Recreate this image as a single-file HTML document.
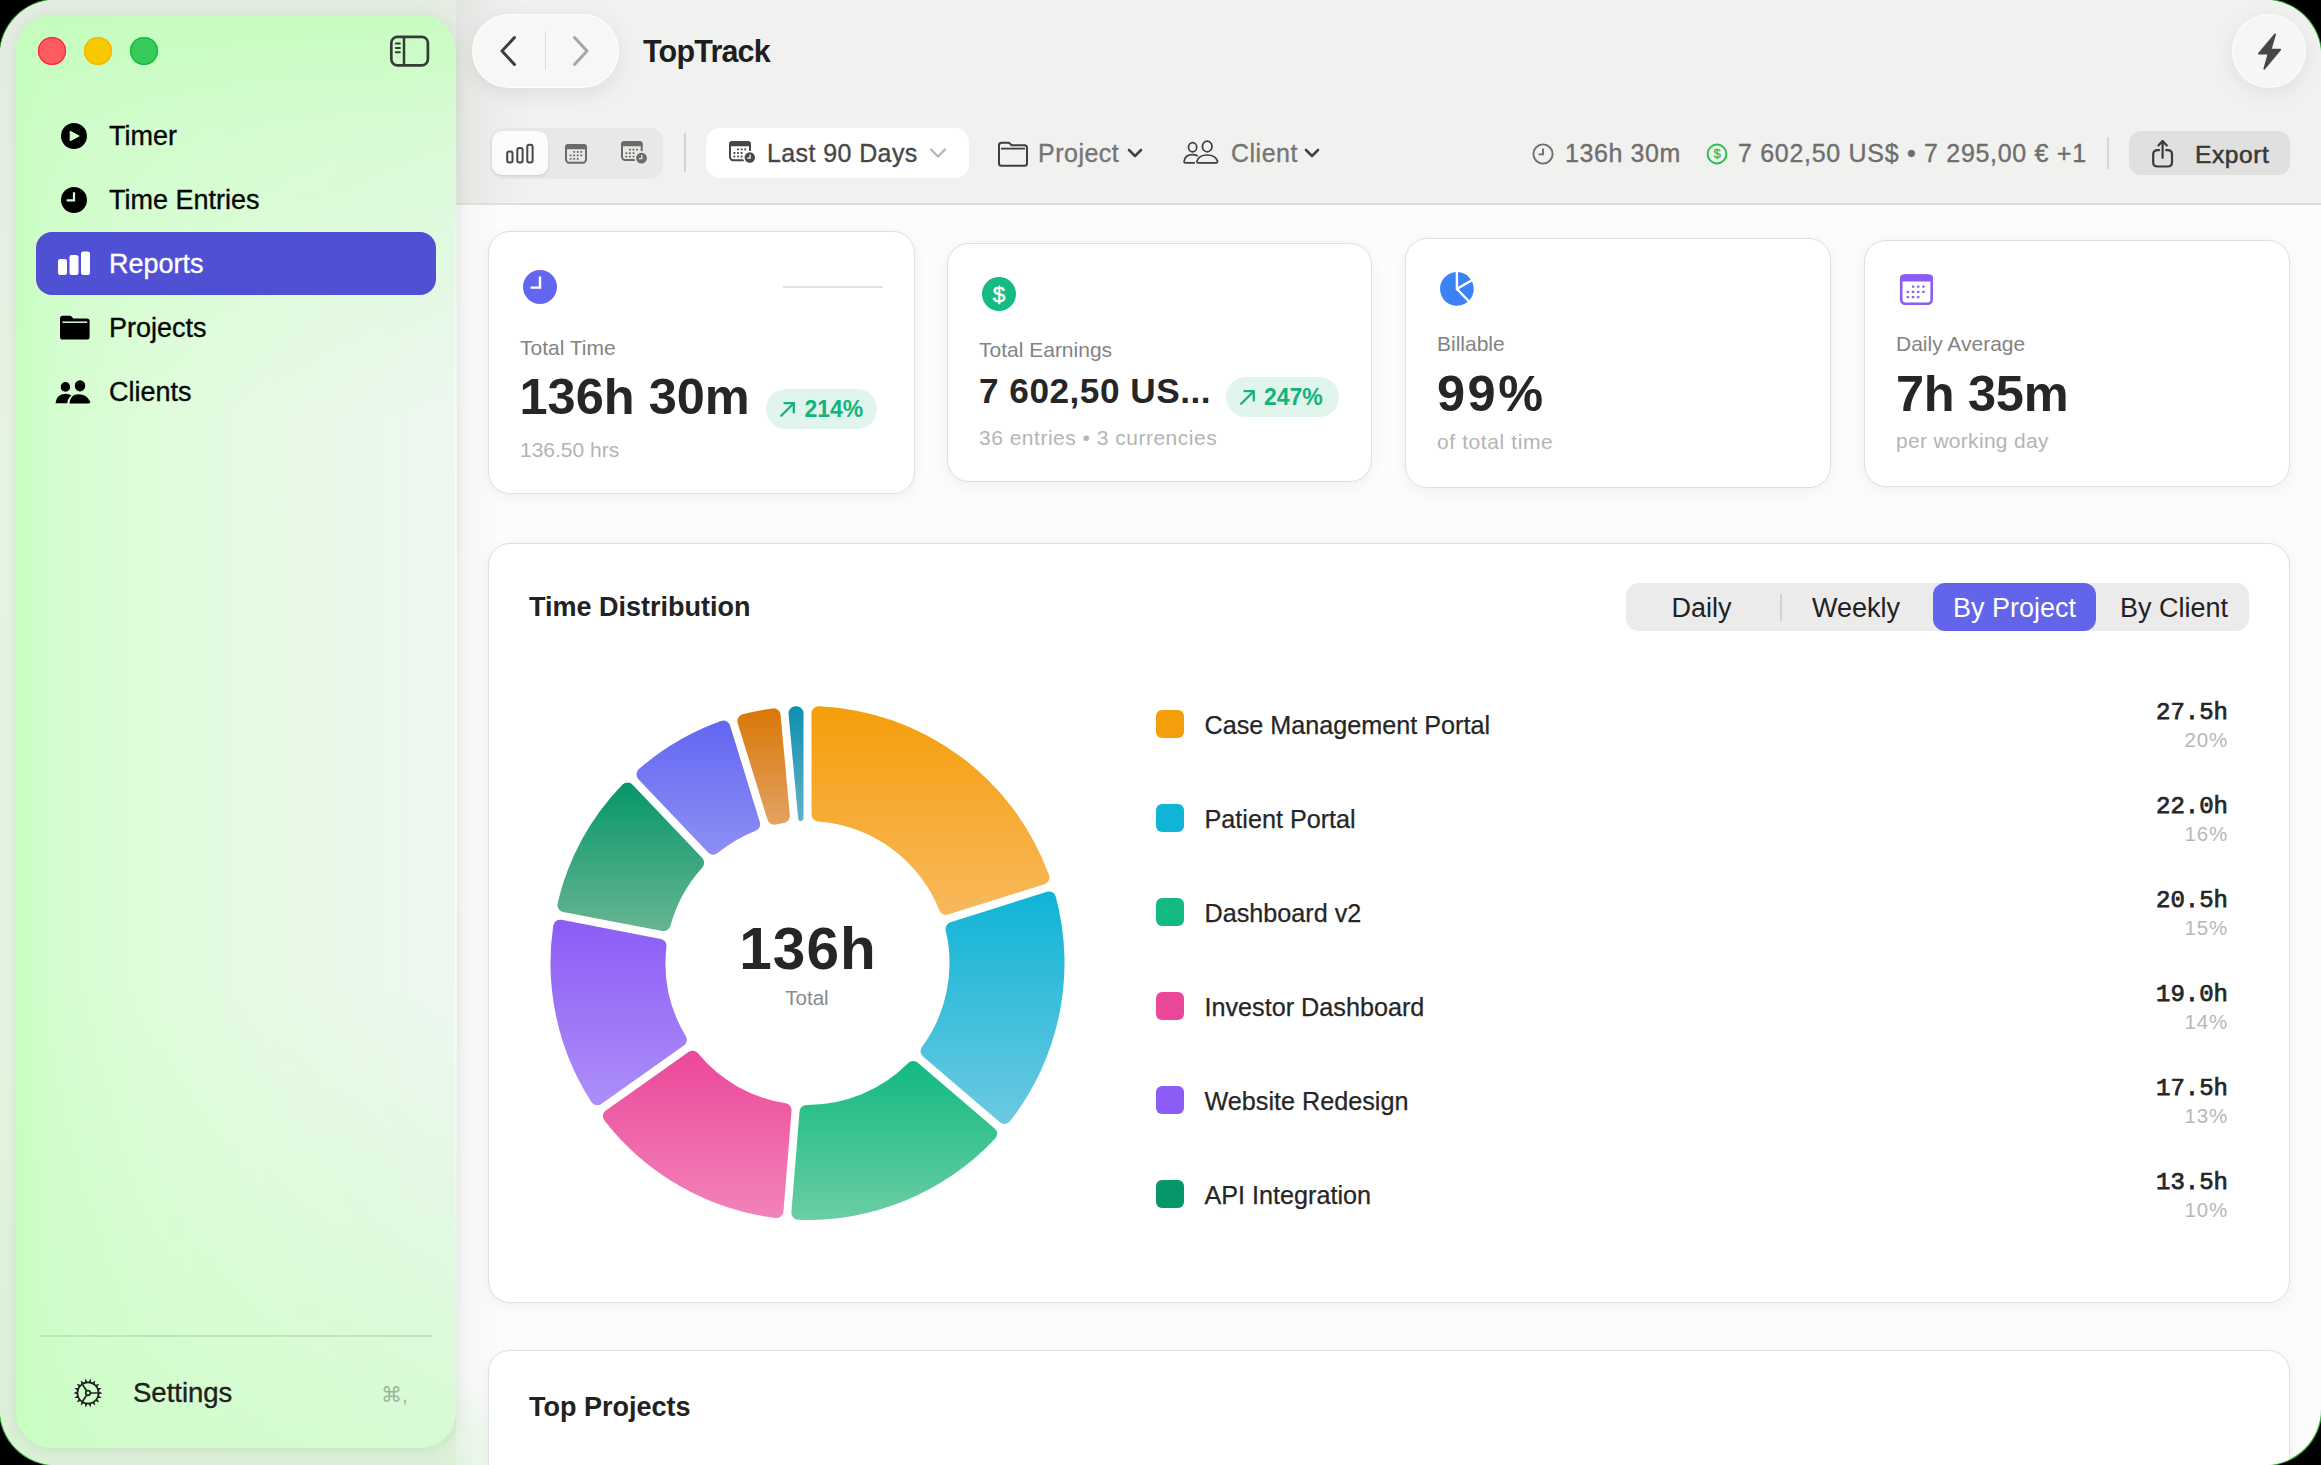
<!DOCTYPE html>
<html><head><meta charset="utf-8"><title>TopTrack Reports</title>
<style>
html,body{margin:0;padding:0}
body{width:2321px;height:1465px;background:#000;overflow:hidden;position:relative;font-family:"Liberation Sans",sans-serif}
.win{position:absolute;left:0;top:0;width:2321px;height:1465px;border-radius:56px;overflow:hidden;background:#fcfcfc;box-shadow:0 0 0 1.2px rgba(60,215,60,0.8)}
.t{position:absolute;white-space:nowrap;line-height:0}
.m{-webkit-text-stroke:0.35px currentColor}
.card{position:absolute;background:#fff;border:1.5px solid #e0e0e0;border-radius:22px;box-sizing:border-box;box-shadow:0 4px 16px rgba(0,0,0,0.045),0 0 6px rgba(0,0,0,0.02)}
svg{overflow:visible}
</style></head><body><div class="win">
<div style="position:absolute;left:0px;top:0px;width:2321px;height:204px;background:#f1f1f0"></div>
<div style="position:absolute;left:456px;top:203px;width:1865px;height:2px;background:#dededc"></div>
<div style="position:absolute;left:456px;top:205px;width:44px;height:1260px;background:linear-gradient(90deg,rgba(60,40,90,0.035),rgba(60,40,90,0))"></div>
<div style="position:absolute;left:456px;top:0px;width:74px;height:203px;background:linear-gradient(90deg,rgba(40,70,30,0.075),rgba(40,70,30,0.02) 50%,rgba(0,0,0,0))"></div>
<div style="position:absolute;left:456px;top:1380px;width:64px;height:85px;background:radial-gradient(ellipse 60px 90px at 0% 100%,rgba(170,240,160,0.28),rgba(170,240,160,0))"></div>
<div style="position:absolute;left:0px;top:0px;width:456px;height:1465px;background:linear-gradient(180deg,#e6ece4 0%,#e8f3e5 30%,#e6f4e3 70%,#dcf0d8 100%)"></div>
<div style="position:absolute;left:16px;top:15px;width:440px;height:1433px;border-radius:36px;background:linear-gradient(180deg,rgba(195,253,187,0.9) 0%,rgba(200,253,193,0.55) 8%,rgba(200,253,193,0) 28%,rgba(200,253,193,0) 68%,rgba(200,253,193,0.6) 100%),linear-gradient(90deg,#c6ffbf 0%,#d4fdcf 7%,#dffcdb 30%,#e7fae5 60%,#eef7f1 100%);box-shadow:0 0 16px rgba(110,190,100,0.16),0 2px 10px rgba(0,0,0,0.04)"></div>
<div style="position:absolute;left:455px;top:60px;width:1.5px;height:1340px;background:linear-gradient(180deg,rgba(255,255,255,0),rgba(255,255,255,0.8) 40%,rgba(255,255,255,0.8) 60%,rgba(255,255,255,0))"></div>
<div style="position:absolute;left:37.7px;top:36.7px;width:28px;height:28px;border-radius:50%;background:#ff5c62;box-shadow:inset 0 0 0 1.2px #ff2436"></div>
<div style="position:absolute;left:83.8px;top:36.7px;width:28px;height:28px;border-radius:50%;background:#fac800;box-shadow:inset 0 0 0 1.2px #f5b400"></div>
<div style="position:absolute;left:129.7px;top:36.7px;width:28px;height:28px;border-radius:50%;background:#38cb5c;box-shadow:inset 0 0 0 1.2px #0cbf36"></div>
<svg style="position:absolute;left:388px;top:34px" width="44" height="34" viewBox="0 0 44 34"><rect x="3.3" y="2.8" width="36.6" height="28.6" rx="6.2" fill="none" stroke="#343d34" stroke-width="2.7"/><line x1="16" y1="3" x2="16" y2="31" stroke="#343d34" stroke-width="2.5"/><g stroke="#343d34" stroke-width="1.9" stroke-linecap="round"><line x1="7.8" y1="9.5" x2="11.9" y2="9.5"/><line x1="7.8" y1="14" x2="11.9" y2="14"/><line x1="7.8" y1="18.3" x2="11.9" y2="18.3"/></g></svg>
<div style="position:absolute;left:36px;top:231.5px;width:399.5px;height:63.19999999999999px;background:#4f50d3;border-radius:16px"></div>
<svg style="position:absolute;left:61px;top:123px" width="26" height="26" viewBox="0 0 26 26"><circle cx="13" cy="13" r="13" fill="#000"/><path d="M9.2 8.2 L18.2 13 L9.2 17.8 Z" fill="#d3fdce" stroke="#d3fdce" stroke-width="1" stroke-linejoin="round"/></svg>
<svg style="position:absolute;left:61px;top:187px" width="26" height="26" viewBox="0 0 26 26"><circle cx="13" cy="13" r="13" fill="#000"/><path d="M13 5.2 V13.4 H5.6" fill="none" stroke="#d6fcd2" stroke-width="2.2"/></svg>
<svg style="position:absolute;left:57px;top:251px" width="34" height="26" viewBox="0 0 34 26"><rect x="1" y="8" width="9" height="16" rx="2.2" fill="#fff"/><rect x="12.5" y="4" width="9" height="20" rx="2.2" fill="#fff"/><rect x="24" y="0.5" width="9" height="23.5" rx="2.2" fill="#fff"/></svg>
<svg style="position:absolute;left:59px;top:314px" width="32" height="27" viewBox="0 0 32 27"><path d="M1 4.5 Q1 1.8 3.8 1.8 H10.5 Q12 1.8 13 3 L14.2 4.5 H27.8 Q30.6 4.5 30.6 7.3 V23 Q30.6 25.6 27.8 25.6 H3.8 Q1 25.6 1 23 Z" fill="#000"/><line x1="3.5" y1="8.2" x2="28.2" y2="8.2" stroke="#d9fcd5" stroke-width="1.5"/></svg>
<svg style="position:absolute;left:55px;top:379px" width="37" height="26" viewBox="0 0 37 26"><ellipse cx="10.4" cy="7.9" rx="4.7" ry="4.9" fill="#000"/><ellipse cx="25" cy="6.8" rx="5.2" ry="5.6" fill="#000"/><path d="M0.5 24.2 Q1.2 15.5 10.5 14.8 Q14.5 14.8 16.5 16.5 Q12.5 19.5 12.2 24.2 Z" fill="#000"/><path d="M14.5 24.6 Q15.3 15.2 23.5 15.2 Q31.7 15.2 35.2 22.5 Q35.6 24.6 33.5 24.6 Z" fill="#000"/></svg>
<div class="t m" style="left:109.00px;top:136.04px;font-size:27px;color:#050805;font-weight:400;font-family:'Liberation Sans', sans-serif;">Timer</div>
<div class="t m" style="left:109.00px;top:199.84px;font-size:27px;color:#050805;font-weight:400;font-family:'Liberation Sans', sans-serif;">Time Entries</div>
<div class="t m" style="left:109.00px;top:263.64px;font-size:27px;color:#ffffff;font-weight:400;font-family:'Liberation Sans', sans-serif;">Reports</div>
<div class="t m" style="left:109.00px;top:327.64px;font-size:27px;color:#050805;font-weight:400;font-family:'Liberation Sans', sans-serif;">Projects</div>
<div class="t m" style="left:109.00px;top:391.64px;font-size:27px;color:#050805;font-weight:400;font-family:'Liberation Sans', sans-serif;">Clients</div>
<div style="position:absolute;left:40px;top:1335px;width:392px;height:2px;background:rgba(110,160,105,0.22)"></div>
<svg style="position:absolute;left:72px;top:1377px" width="32" height="32" viewBox="0 0 32 32"><g fill="none" stroke="#1f241f" stroke-width="1.7"><circle cx="16" cy="16" r="10.6"/><circle cx="16" cy="16" r="2.3"/><line x1="18.90" y1="16.00" x2="26.40" y2="16.00"/><line x1="14.42" y1="13.57" x2="10.34" y2="7.28"/><line x1="14.42" y1="18.43" x2="10.34" y2="24.72"/></g><path fill="#1f241f" d="M26.30 14.55L30.10 15.72L30.10 16.28L26.30 17.45ZM26.17 18.16L29.34 20.56L29.15 21.09L25.18 20.89ZM24.82 21.51L26.98 24.85L26.62 25.28L22.96 23.73ZM22.41 24.19L23.29 28.07L22.80 28.35L19.89 25.64ZM19.22 25.89L18.73 29.83L18.17 29.93L16.36 26.39ZM15.64 26.39L13.83 29.93L13.27 29.83L12.78 25.89ZM12.11 25.64L9.20 28.35L8.71 28.07L9.59 24.19ZM9.04 23.73L5.38 25.28L5.02 24.85L7.18 21.51ZM6.82 20.89L2.85 21.09L2.66 20.56L5.83 18.16ZM5.70 17.45L1.90 16.28L1.90 15.72L5.70 14.55ZM5.83 13.84L2.66 11.44L2.85 10.91L6.82 11.11ZM7.18 10.49L5.02 7.15L5.38 6.72L9.04 8.27ZM9.59 7.81L8.71 3.93L9.20 3.65L12.11 6.36ZM12.78 6.11L13.27 2.17L13.83 2.07L15.64 5.61ZM16.36 5.61L18.17 2.07L18.73 2.17L19.22 6.11ZM19.89 6.36L22.80 3.65L23.29 3.93L22.41 7.81ZM22.96 8.27L26.62 6.72L26.98 7.15L24.82 10.49ZM25.18 11.11L29.15 10.91L29.34 11.44L26.17 13.84Z"/></svg>
<div class="t m" style="left:133.00px;top:1393.27px;font-size:27.5px;color:#1e211e;font-weight:400;font-family:'Liberation Sans', sans-serif;">Settings</div>
<div class="t " style="left:381.00px;top:1394.89px;font-size:20.5px;color:#9fb59c;font-weight:400;font-family:'Liberation Sans', sans-serif;">&#8984;,</div>
<div style="position:absolute;left:472.5px;top:15px;width:145px;height:71.5px;border-radius:36px;background:#f7f7f6;box-shadow:0 0 0 1px rgba(255,255,255,0.95),0 6px 22px rgba(0,0,0,0.09)"></div>
<div style="position:absolute;left:544.5px;top:31px;width:1.5px;height:39px;background:#dcdcdb"></div>
<svg style="position:absolute;left:496px;top:34px" width="26" height="34" viewBox="0 0 26 34"><path d="M18.5 3.5 L6 17 L18.5 30.5" fill="none" stroke="#3d3d3d" stroke-width="3" stroke-linecap="round" stroke-linejoin="round"/></svg>
<svg style="position:absolute;left:568px;top:34px" width="26" height="34" viewBox="0 0 26 34"><path d="M6.5 3.5 L19 17 L6.5 30.5" fill="none" stroke="#a6a6a5" stroke-width="3" stroke-linecap="round" stroke-linejoin="round"/></svg>
<div class="t " style="left:643.00px;top:51.33px;font-size:30.5px;color:#1e1e1e;font-weight:700;font-family:'Liberation Sans', sans-serif;letter-spacing:-0.8px;">TopTrack</div>
<div style="position:absolute;left:2233px;top:15px;width:72px;height:72px;border-radius:50%;background:#f6f6f5;box-shadow:0 0 0 1px rgba(255,255,255,0.95),0 5px 22px rgba(0,0,0,0.08)"></div>
<svg style="position:absolute;left:2255px;top:33px" width="30" height="40" viewBox="0 0 30 40"><path d="M20.1 1.4 L3.9 20.6 H13.6 L9.3 35.8 L25.2 16.6 H15.6 Z" fill="#474747" stroke="#474747" stroke-width="1.8" stroke-linejoin="round"/></svg>
<div style="position:absolute;left:489px;top:128px;width:174px;height:51px;background:#e8e8e6;border-radius:13px"></div>
<div style="position:absolute;left:492px;top:131px;width:56px;height:44px;background:#fbfbfa;border-radius:10px;box-shadow:0 1px 3px rgba(0,0,0,0.12)"></div>
<svg style="position:absolute;left:503px;top:141px" width="34" height="26" viewBox="0 0 34 26"><g fill="none" stroke="#474747" stroke-width="2"><rect x="4.2" y="10.4" width="5.3" height="11.2" rx="2"/><rect x="14.3" y="7.1" width="5.3" height="14.5" rx="2"/><rect x="24.3" y="3.8" width="5.3" height="17.8" rx="2"/></g></svg>
<svg style="position:absolute;left:563px;top:142px" width="36" height="33.7" viewBox="0 0 36 33.7"><rect x="3.0" y="3.0" width="20.0" height="17.7" rx="3.2" fill="none" stroke="#6b6b6a" stroke-width="2.0"/><path d="M2 7.2 V5.2 Q2 2 5.2 2 H20.8 Q24 2 24 5.2 V7.2 Z" fill="#6b6b6a"/><rect x="10.20" y="8.95" width="1.9" height="1.9" rx="0.4" fill="#6b6b6a"/><rect x="13.75" y="8.95" width="1.9" height="1.9" rx="0.4" fill="#6b6b6a"/><rect x="17.30" y="8.95" width="1.9" height="1.9" rx="0.4" fill="#6b6b6a"/><rect x="6.65" y="12.45" width="1.9" height="1.9" rx="0.4" fill="#6b6b6a"/><rect x="10.20" y="12.45" width="1.9" height="1.9" rx="0.4" fill="#6b6b6a"/><rect x="13.75" y="12.45" width="1.9" height="1.9" rx="0.4" fill="#6b6b6a"/><rect x="17.30" y="12.45" width="1.9" height="1.9" rx="0.4" fill="#6b6b6a"/><rect x="6.65" y="15.95" width="1.9" height="1.9" rx="0.4" fill="#6b6b6a"/><rect x="10.20" y="15.95" width="1.9" height="1.9" rx="0.4" fill="#6b6b6a"/><rect x="13.75" y="15.95" width="1.9" height="1.9" rx="0.4" fill="#6b6b6a"/></svg>
<svg style="position:absolute;left:619px;top:139px" width="35.7" height="34" viewBox="0 0 35.7 34"><rect x="3.0" y="3.0" width="19.7" height="18.0" rx="3.2" fill="none" stroke="#6b6b6a" stroke-width="2.0"/><path d="M2 7.2 V5.2 Q2 2 5.2 2 H20.5 Q23.7 2 23.7 5.2 V7.2 Z" fill="#6b6b6a"/><rect x="10.00" y="9.65" width="1.9" height="1.9" rx="0.4" fill="#6b6b6a"/><rect x="13.55" y="9.65" width="1.9" height="1.9" rx="0.4" fill="#6b6b6a"/><rect x="17.10" y="9.65" width="1.9" height="1.9" rx="0.4" fill="#6b6b6a"/><rect x="6.45" y="13.15" width="1.9" height="1.9" rx="0.4" fill="#6b6b6a"/><rect x="10.00" y="13.15" width="1.9" height="1.9" rx="0.4" fill="#6b6b6a"/><rect x="13.55" y="13.15" width="1.9" height="1.9" rx="0.4" fill="#6b6b6a"/><rect x="6.45" y="16.65" width="1.9" height="1.9" rx="0.4" fill="#6b6b6a"/><rect x="10.00" y="16.65" width="1.9" height="1.9" rx="0.4" fill="#6b6b6a"/><rect x="13.55" y="16.65" width="1.9" height="1.9" rx="0.4" fill="#6b6b6a"/><circle cx="22.5" cy="19.1" r="7.0" fill="#e8e8e6"/><circle cx="22.5" cy="19.1" r="5.4" fill="#6b6b6a"/><path d="M22.80 16.10 V19.70 H19.90" fill="none" stroke="#e8e8e6" stroke-width="1.3"/></svg>
<div style="position:absolute;left:684px;top:133px;width:2px;height:39px;background:#d3d3d1"></div>
<div style="position:absolute;left:706px;top:128px;width:263px;height:50px;background:#ffffff;border-radius:14px"></div>
<svg style="position:absolute;left:727px;top:139.2px" width="36" height="34.3" viewBox="0 0 36 34.3"><rect x="3.0" y="3.0" width="20.0" height="18.3" rx="3.2" fill="none" stroke="#474747" stroke-width="2.0"/><path d="M2 7.2 V5.2 Q2 2 5.2 2 H20.8 Q24 2 24 5.2 V7.2 Z" fill="#474747"/><rect x="10.05" y="9.45" width="1.9" height="1.9" rx="0.4" fill="#474747"/><rect x="13.65" y="9.45" width="1.9" height="1.9" rx="0.4" fill="#474747"/><rect x="17.25" y="9.45" width="1.9" height="1.9" rx="0.4" fill="#474747"/><rect x="6.45" y="13.00" width="1.9" height="1.9" rx="0.4" fill="#474747"/><rect x="10.05" y="13.00" width="1.9" height="1.9" rx="0.4" fill="#474747"/><rect x="13.65" y="13.00" width="1.9" height="1.9" rx="0.4" fill="#474747"/><rect x="6.45" y="16.55" width="1.9" height="1.9" rx="0.4" fill="#474747"/><rect x="10.05" y="16.55" width="1.9" height="1.9" rx="0.4" fill="#474747"/><rect x="13.65" y="16.55" width="1.9" height="1.9" rx="0.4" fill="#474747"/><circle cx="22.8" cy="18.5" r="6.800000000000001" fill="#ffffff"/><circle cx="22.8" cy="18.5" r="5.2" fill="#474747"/><path d="M23.10 15.50 V19.10 H20.20" fill="none" stroke="#ffffff" stroke-width="1.3"/></svg>
<div class="t m" style="left:767.00px;top:153.13px;font-size:25px;color:#474747;font-weight:400;font-family:'Liberation Sans', sans-serif;letter-spacing:0.4px;">Last 90 Days</div>
<svg style="position:absolute;left:928px;top:146px" width="20" height="14" viewBox="0 0 20 14"><path d="M3 3.5 L10 10.5 L17 3.5" fill="none" stroke="#b3b3b2" stroke-width="2.2" stroke-linecap="round" stroke-linejoin="round"/></svg>
<svg style="position:absolute;left:996px;top:140px" width="34" height="28" viewBox="0 0 34 28"><path d="M3 5.5 Q3 2.8 5.6 2.8 H12 Q13.3 2.8 14.2 3.8 L15.6 5.3 H28.5 Q31 5.3 31 7.8 V23.5 Q31 25.8 28.5 25.8 H5.6 Q3 25.8 3 23.5 Z" fill="none" stroke="#3e3e3e" stroke-width="2"/><line x1="5" y1="8.6" x2="29" y2="8.6" stroke="#3e3e3e" stroke-width="1.8"/></svg>
<div class="t m" style="left:1038.00px;top:153.13px;font-size:25px;color:#757575;font-weight:400;font-family:'Liberation Sans', sans-serif;letter-spacing:0.5px;">Project</div>
<svg style="position:absolute;left:1125px;top:146px" width="20" height="14" viewBox="0 0 20 14"><path d="M4 4 L10 10 L16 4" fill="none" stroke="#444" stroke-width="2.6" stroke-linecap="round" stroke-linejoin="round"/></svg>
<svg style="position:absolute;left:1175px;top:132px" width="55" height="40" viewBox="0 0 55 40"><g fill="none" stroke="#3e3e3e" stroke-width="1.7" stroke-linecap="round" stroke-linejoin="round"><ellipse cx="17.6" cy="15.3" rx="4.1" ry="4.6"/><ellipse cx="32.2" cy="14.5" rx="4.8" ry="5.3"/><path d="M22.3 23.7 Q20 22.6 17.6 22.6 Q10.2 22.6 9.1 29.3 Q8.9 30.9 10.6 30.9 H19.2"/><path d="M23.6 30.9 H41 Q42.8 30.9 42.5 29.2 Q40.6 23 32.2 23 Q23.8 23 21.9 29.2 Q21.6 30.9 23.6 30.9 Z"/></g></svg>
<div class="t m" style="left:1231.00px;top:153.13px;font-size:25px;color:#757575;font-weight:400;font-family:'Liberation Sans', sans-serif;letter-spacing:0.5px;">Client</div>
<svg style="position:absolute;left:1302px;top:146px" width="20" height="14" viewBox="0 0 20 14"><path d="M4 4 L10 10 L16 4" fill="none" stroke="#444" stroke-width="2.6" stroke-linecap="round" stroke-linejoin="round"/></svg>
<svg style="position:absolute;left:1531px;top:142px" width="24" height="24" viewBox="0 0 24 24"><circle cx="12" cy="12" r="9.6" fill="none" stroke="#6f6f6f" stroke-width="1.9"/><path d="M12 6.5 V12.4 H7.6" fill="none" stroke="#6f6f6f" stroke-width="1.9"/></svg>
<div class="t m" style="left:1565.00px;top:153.23px;font-size:25px;color:#6e6e6e;font-weight:400;font-family:'Liberation Sans', sans-serif;letter-spacing:0.6px;">136h 30m</div>
<svg style="position:absolute;left:1705px;top:142px" width="24" height="24" viewBox="0 0 24 24"><circle cx="12" cy="12" r="9.4" fill="none" stroke="#29c246" stroke-width="2"/><text x="12" y="16.4" text-anchor="middle" font-family="Liberation Sans" font-size="13" fill="#29c246" stroke="#29c246" stroke-width="0.3">$</text></svg>
<div class="t m" style="left:1738.00px;top:153.23px;font-size:25px;color:#6e6e6e;font-weight:400;font-family:'Liberation Sans', sans-serif;letter-spacing:0.7px;">7 602,50 US$ &#8226; 7 295,00 &#8364; +1</div>
<div style="position:absolute;left:2107px;top:137px;width:2px;height:32px;background:#d8d8d6"></div>
<div style="position:absolute;left:2129px;top:131px;width:161px;height:44px;background:#e0e0de;border-radius:12px"></div>
<svg style="position:absolute;left:2148px;top:138px" width="30" height="32" viewBox="0 0 30 32"><g fill="none" stroke="#3a3a3a" stroke-width="2.2" stroke-linecap="round" stroke-linejoin="round"><path d="M11 12.2 H9.6 Q5.2 12.2 5.2 16.6 V24.2 Q5.2 28.5 9.6 28.5 H19.6 Q24 28.5 24 24.2 V16.6 Q24 12.2 19.6 12.2 H18.2"/><path d="M14.6 19.8 V3.4"/><path d="M10.4 7.4 L14.6 3.1 L18.8 7.4"/></g></svg>
<div class="t " style="left:2195.00px;top:154.51px;font-size:24.5px;color:#383838;font-weight:400;font-family:'Liberation Sans', sans-serif;letter-spacing:0.6px;-webkit-text-stroke:0.55px #383838;">Export</div>
<div class="card" style="left:488px;top:231px;width:427px;height:263px;"></div>
<div class="card" style="left:947px;top:243px;width:425px;height:239px;"></div>
<div class="card" style="left:1405px;top:238px;width:426px;height:250px;"></div>
<div class="card" style="left:1864px;top:240px;width:426px;height:247px;"></div>
<svg style="position:absolute;left:523px;top:270px" width="34" height="34" viewBox="0 0 34 34"><circle cx="17" cy="17" r="17" fill="#6366f1"/><path d="M17 6.5 V17.6 H7.5" fill="none" stroke="#fff" stroke-width="2.4"/></svg>
<div style="position:absolute;left:783px;top:285.8px;width:100px;height:2.0px;background:#e3e3e3"></div>
<div class="t " style="left:520.00px;top:348.12px;font-size:21px;color:#838383;font-weight:400;font-family:'Liberation Sans', sans-serif;">Total Time</div>
<div class="t " style="left:519.50px;top:397.29px;font-size:50.5px;color:#262626;font-weight:700;font-family:'Liberation Sans', sans-serif;letter-spacing:0px;">136h 30m</div>
<div style="position:absolute;left:766px;top:389px;width:111px;height:40px;background:#e1f5ec;border-radius:20px"></div>
<svg style="position:absolute;left:778px;top:399px" width="20" height="20" viewBox="0 0 20 20"><g fill="none" stroke="#12b37c" stroke-width="2.3" stroke-linecap="round" stroke-linejoin="round"><path d="M3.2 16.8 L15.5 4.5"/><path d="M6.5 4.2 H15.8 V13.5"/></g></svg>
<div class="t " style="left:804.50px;top:409.03px;font-size:23px;color:#12b37c;font-weight:700;font-family:'Liberation Sans', sans-serif;">214%</div>
<div class="t " style="left:520.00px;top:449.52px;font-size:21px;color:#b4b4b4;font-weight:400;font-family:'Liberation Sans', sans-serif;">136.50 hrs</div>
<svg style="position:absolute;left:982px;top:277px" width="34" height="34" viewBox="0 0 34 34"><circle cx="17" cy="17" r="17" fill="#14bb83"/><text x="17" y="24.6" text-anchor="middle" font-family="Liberation Sans" font-size="22.5" fill="#fff" stroke="#fff" stroke-width="0.5">$</text></svg>
<div class="t " style="left:979.00px;top:349.72px;font-size:21px;color:#838383;font-weight:400;font-family:'Liberation Sans', sans-serif;">Total Earnings</div>
<div class="t " style="left:979.00px;top:390.80px;font-size:35.2px;color:#262626;font-weight:700;font-family:'Liberation Sans', sans-serif;letter-spacing:0.5px;">7 602,50 US...</div>
<div style="position:absolute;left:1226px;top:377px;width:113px;height:40px;background:#e1f5ec;border-radius:20px"></div>
<svg style="position:absolute;left:1238px;top:387px" width="20" height="20" viewBox="0 0 20 20"><g fill="none" stroke="#12b37c" stroke-width="2.3" stroke-linecap="round" stroke-linejoin="round"><path d="M3.2 16.8 L15.5 4.5"/><path d="M6.5 4.2 H15.8 V13.5"/></g></svg>
<div class="t " style="left:1264.00px;top:397.03px;font-size:23px;color:#12b37c;font-weight:700;font-family:'Liberation Sans', sans-serif;">247%</div>
<div class="t " style="left:979.00px;top:437.72px;font-size:21px;color:#b4b4b4;font-weight:400;font-family:'Liberation Sans', sans-serif;letter-spacing:0.5px;">36 entries &#8226; 3 currencies</div>
<svg style="position:absolute;left:1432px;top:264px" width="50" height="50" viewBox="0 0 50 50"><path fill="#3b82f6" d="M26.10 22.82L26.10 8.04A16.9 16.9 0 0 1 38.90 15.43ZM26.83 25.17L40.10 17.51A16.9 16.9 0 0 1 37.47 36.19ZM23.70 25.38L35.75 37.86A16.9 16.9 0 1 1 23.70 8.04Z"/></svg>
<div class="t " style="left:1437.00px;top:344.42px;font-size:21px;color:#838383;font-weight:400;font-family:'Liberation Sans', sans-serif;">Billable</div>
<div class="t " style="left:1437.00px;top:394.19px;font-size:50.5px;color:#262626;font-weight:700;font-family:'Liberation Sans', sans-serif;letter-spacing:2.5px;">99%</div>
<div class="t " style="left:1437.00px;top:442.32px;font-size:21px;color:#b4b4b4;font-weight:400;font-family:'Liberation Sans', sans-serif;letter-spacing:0.6px;">of total time</div>
<svg style="position:absolute;left:1899px;top:274px" width="36" height="32" viewBox="0 0 36 32"><rect x="2.2" y="1.6" width="30.5" height="28.2" rx="4" fill="none" stroke="#8b5cf6" stroke-width="2.6"/><rect x="1" y="0.4" width="33" height="7.2" rx="3.5" fill="#8b5cf6"/><rect x="12.9" y="11.4" width="2.3" height="2.3" rx="0.5" fill="#8b5cf6"/><rect x="18.1" y="11.4" width="2.3" height="2.3" rx="0.5" fill="#8b5cf6"/><rect x="23.3" y="11.4" width="2.3" height="2.3" rx="0.5" fill="#8b5cf6"/><rect x="7.7" y="16.7" width="2.3" height="2.3" rx="0.5" fill="#8b5cf6"/><rect x="12.9" y="16.7" width="2.3" height="2.3" rx="0.5" fill="#8b5cf6"/><rect x="18.1" y="16.7" width="2.3" height="2.3" rx="0.5" fill="#8b5cf6"/><rect x="23.3" y="16.7" width="2.3" height="2.3" rx="0.5" fill="#8b5cf6"/><rect x="7.7" y="21.9" width="2.3" height="2.3" rx="0.5" fill="#8b5cf6"/><rect x="12.9" y="21.9" width="2.3" height="2.3" rx="0.5" fill="#8b5cf6"/><rect x="18.1" y="21.9" width="2.3" height="2.3" rx="0.5" fill="#8b5cf6"/></svg>
<div class="t " style="left:1896.00px;top:343.72px;font-size:21px;color:#838383;font-weight:400;font-family:'Liberation Sans', sans-serif;">Daily Average</div>
<div class="t " style="left:1896.00px;top:394.19px;font-size:50.5px;color:#262626;font-weight:700;font-family:'Liberation Sans', sans-serif;letter-spacing:-0.3px;">7h 35m</div>
<div class="t " style="left:1896.00px;top:441.32px;font-size:21px;color:#b4b4b4;font-weight:400;font-family:'Liberation Sans', sans-serif;letter-spacing:0.3px;">per working day</div>
<div class="card" style="left:488px;top:543px;width:1802px;height:760px;"></div>
<div class="t " style="left:529.00px;top:607.44px;font-size:27px;color:#222222;font-weight:700;font-family:'Liberation Sans', sans-serif;">Time Distribution</div>
<div style="position:absolute;left:1626px;top:583px;width:623px;height:48px;background:#ebebeb;border-radius:13px"></div>
<div style="position:absolute;left:1779.5px;top:594px;width:2.0px;height:27px;background:#d2d2d2"></div>
<div style="position:absolute;left:1933px;top:583px;width:163px;height:48px;background:#6264ea;border-radius:12px"></div>
<div class="t " style="left:1701.50px;transform:translateX(-50%);top:608.14px;font-size:27px;color:#222;font-weight:400;font-family:'Liberation Sans', sans-serif;">Daily</div>
<div class="t " style="left:1856.00px;transform:translateX(-50%);top:608.14px;font-size:27px;color:#222;font-weight:400;font-family:'Liberation Sans', sans-serif;">Weekly</div>
<div class="t " style="left:2014.50px;transform:translateX(-50%);top:608.14px;font-size:27px;color:#fff;font-weight:400;font-family:'Liberation Sans', sans-serif;">By Project</div>
<div class="t " style="left:2174.00px;transform:translateX(-50%);top:608.14px;font-size:27px;color:#222;font-weight:400;font-family:'Liberation Sans', sans-serif;">By Client</div>
<svg style="position:absolute;left:530px;top:690px" width="560" height="560" viewBox="530 690 560 560"><defs>
<linearGradient id="g0" x1="0" y1="0" x2="0" y2="1"><stop offset="0" stop-color="#f59e0b"/><stop offset="1" stop-color="#f8b85c"/></linearGradient>
<linearGradient id="g1" x1="0" y1="0" x2="0" y2="1"><stop offset="0" stop-color="#0fb4d6"/><stop offset="1" stop-color="#6cc9e1"/></linearGradient>
<linearGradient id="g2" x1="0" y1="0" x2="0" y2="1"><stop offset="0" stop-color="#12b981"/><stop offset="1" stop-color="#6bcea4"/></linearGradient>
<linearGradient id="g3" x1="0" y1="0" x2="0" y2="1"><stop offset="0" stop-color="#ec4899"/><stop offset="1" stop-color="#f283b9"/></linearGradient>
<linearGradient id="g4" x1="0" y1="0" x2="0" y2="1"><stop offset="0" stop-color="#8b5cf6"/><stop offset="1" stop-color="#ad8ef8"/></linearGradient>
<linearGradient id="g5" x1="0" y1="0" x2="0" y2="1"><stop offset="0" stop-color="#069669"/><stop offset="1" stop-color="#67b592"/></linearGradient>
<linearGradient id="g6" x1="0" y1="0" x2="0" y2="1"><stop offset="0" stop-color="#6366f1"/><stop offset="1" stop-color="#8d8ff5"/></linearGradient>
<linearGradient id="g7" x1="0" y1="0" x2="0" y2="1"><stop offset="0" stop-color="#d97706"/><stop offset="1" stop-color="#e3a263"/></linearGradient>
<linearGradient id="g8" x1="0" y1="0" x2="0" y2="1"><stop offset="0" stop-color="#0e8fb0"/><stop offset="1" stop-color="#62b1c8"/></linearGradient>
</defs>
<path fill="url(#g0)" d="M811.50 814.41 L811.50 713.24 A7.00 7.00 0 0 1 818.81 706.25 A257 257 0 0 1 1049.01 875.12 A7.00 7.00 0 0 1 1044.53 884.20 L948.04 914.57 A7.00 7.00 0 0 1 939.43 910.48 A142 142 0 0 0 817.98 821.39 A7.00 7.00 0 0 1 811.50 814.41 Z"/>
<path fill="url(#g1)" d="M950.44 922.20 L1046.94 891.83 A7.00 7.00 0 0 1 1055.80 896.70 A257 257 0 0 1 1009.94 1121.32 A7.00 7.00 0 0 1 999.88 1122.33 L923.01 1056.56 A7.00 7.00 0 0 1 921.92 1047.10 A142 142 0 0 0 945.73 930.48 A7.00 7.00 0 0 1 950.44 922.20 Z"/>
<path fill="url(#g2)" d="M917.81 1062.64 L994.68 1128.41 A7.00 7.00 0 0 1 995.24 1138.51 A257 257 0 0 1 798.11 1219.83 A7.00 7.00 0 0 1 791.39 1212.27 L799.53 1111.43 A7.00 7.00 0 0 1 806.55 1105.00 A142 142 0 0 0 908.29 1063.03 A7.00 7.00 0 0 1 917.81 1062.64 Z"/>
<path fill="url(#g3)" d="M791.56 1110.79 L783.42 1211.63 A7.00 7.00 0 0 1 775.57 1218.01 A257 257 0 0 1 604.42 1120.50 A7.00 7.00 0 0 1 605.91 1110.50 L688.50 1052.08 A7.00 7.00 0 0 1 697.94 1053.34 A142 142 0 0 0 785.66 1103.31 A7.00 7.00 0 0 1 791.56 1110.79 Z"/>
<path fill="url(#g4)" d="M683.88 1045.55 L601.29 1103.97 A7.00 7.00 0 0 1 591.36 1102.04 A257 257 0 0 1 553.23 925.65 A7.00 7.00 0 0 1 561.48 919.79 L660.82 938.88 A7.00 7.00 0 0 1 666.45 946.57 A142 142 0 0 0 685.83 1036.22 A7.00 7.00 0 0 1 683.88 1045.55 Z"/>
<path fill="url(#g5)" d="M662.33 931.03 L562.99 911.93 A7.00 7.00 0 0 1 557.50 903.44 A257 257 0 0 1 622.51 784.60 A7.00 7.00 0 0 1 632.63 784.64 L702.28 858.00 A7.00 7.00 0 0 1 702.39 867.52 A142 142 0 0 0 670.41 925.98 A7.00 7.00 0 0 1 662.33 931.03 Z"/>
<path fill="url(#g6)" d="M708.08 852.49 L638.43 779.13 A7.00 7.00 0 0 1 638.91 769.02 A257 257 0 0 1 721.02 720.99 A7.00 7.00 0 0 1 730.06 725.52 L759.88 822.19 A7.00 7.00 0 0 1 755.74 830.77 A142 142 0 0 0 717.59 853.09 A7.00 7.00 0 0 1 708.08 852.49 Z"/>
<path fill="url(#g7)" d="M767.52 819.83 L737.70 723.16 A7.00 7.00 0 0 1 742.63 714.32 A257 257 0 0 1 772.64 708.38 A7.00 7.00 0 0 1 780.56 714.67 L789.86 815.40 A7.00 7.00 0 0 1 784.04 822.95 A142 142 0 0 0 775.78 824.59 A7.00 7.00 0 0 1 767.52 819.83 Z"/>
<path fill="url(#g8)" d="M798.21 818.86 L788.52 713.93 A7.00 7.00 0 0 1 795.16 706.30 A257 257 0 0 1 796.19 706.25 A7.00 7.00 0 0 1 803.50 713.24 L803.50 818.62 A2.53 2.53 0 0 1 801.09 821.14 A142 142 0 0 0 800.84 821.16 A2.53 2.53 0 0 1 798.21 818.86 Z"/>
</svg><div class="t " style="left:808.00px;transform:translateX(-50%);top:949.22px;font-size:58.5px;color:#262626;font-weight:700;font-family:'Liberation Sans', sans-serif;letter-spacing:1.0px;">136h</div>
<div class="t " style="left:807.00px;transform:translateX(-50%);top:997.89px;font-size:20.5px;color:#8a8a8a;font-weight:400;font-family:'Liberation Sans', sans-serif;">Total</div>
<div style="position:absolute;left:1156px;top:710px;width:28px;height:28px;background:#f59e0b;border-radius:6px"></div>
<div class="t " style="left:1204.50px;top:724.66px;font-size:25.2px;color:#262626;font-weight:400;font-family:'Liberation Sans', sans-serif;-webkit-text-stroke:0.25px #262626;">Case Management Portal</div>
<div class="t " style="right:93.00px;top:712.61px;font-size:24px;color:#262626;font-weight:400;font-family:'Liberation Mono', monospace;-webkit-text-stroke:0.75px #262626;">27.5h</div>
<div class="t " style="right:93.00px;top:739.69px;font-size:20.5px;color:#b8b8b8;font-weight:400;font-family:'Liberation Sans', sans-serif;letter-spacing:0.8px;">20%</div>
<div style="position:absolute;left:1156px;top:804px;width:28px;height:28px;background:#0fb4d6;border-radius:6px"></div>
<div class="t " style="left:1204.50px;top:818.66px;font-size:25.2px;color:#262626;font-weight:400;font-family:'Liberation Sans', sans-serif;-webkit-text-stroke:0.25px #262626;">Patient Portal</div>
<div class="t " style="right:93.00px;top:806.61px;font-size:24px;color:#262626;font-weight:400;font-family:'Liberation Mono', monospace;-webkit-text-stroke:0.75px #262626;">22.0h</div>
<div class="t " style="right:93.00px;top:833.69px;font-size:20.5px;color:#b8b8b8;font-weight:400;font-family:'Liberation Sans', sans-serif;letter-spacing:0.8px;">16%</div>
<div style="position:absolute;left:1156px;top:898px;width:28px;height:28px;background:#12b981;border-radius:6px"></div>
<div class="t " style="left:1204.50px;top:912.66px;font-size:25.2px;color:#262626;font-weight:400;font-family:'Liberation Sans', sans-serif;-webkit-text-stroke:0.25px #262626;">Dashboard v2</div>
<div class="t " style="right:93.00px;top:900.61px;font-size:24px;color:#262626;font-weight:400;font-family:'Liberation Mono', monospace;-webkit-text-stroke:0.75px #262626;">20.5h</div>
<div class="t " style="right:93.00px;top:927.69px;font-size:20.5px;color:#b8b8b8;font-weight:400;font-family:'Liberation Sans', sans-serif;letter-spacing:0.8px;">15%</div>
<div style="position:absolute;left:1156px;top:992px;width:28px;height:28px;background:#ec4899;border-radius:6px"></div>
<div class="t " style="left:1204.50px;top:1006.66px;font-size:25.2px;color:#262626;font-weight:400;font-family:'Liberation Sans', sans-serif;-webkit-text-stroke:0.25px #262626;">Investor Dashboard</div>
<div class="t " style="right:93.00px;top:994.61px;font-size:24px;color:#262626;font-weight:400;font-family:'Liberation Mono', monospace;-webkit-text-stroke:0.75px #262626;">19.0h</div>
<div class="t " style="right:93.00px;top:1021.69px;font-size:20.5px;color:#b8b8b8;font-weight:400;font-family:'Liberation Sans', sans-serif;letter-spacing:0.8px;">14%</div>
<div style="position:absolute;left:1156px;top:1086px;width:28px;height:28px;background:#8b5cf6;border-radius:6px"></div>
<div class="t " style="left:1204.50px;top:1100.66px;font-size:25.2px;color:#262626;font-weight:400;font-family:'Liberation Sans', sans-serif;-webkit-text-stroke:0.25px #262626;">Website Redesign</div>
<div class="t " style="right:93.00px;top:1088.61px;font-size:24px;color:#262626;font-weight:400;font-family:'Liberation Mono', monospace;-webkit-text-stroke:0.75px #262626;">17.5h</div>
<div class="t " style="right:93.00px;top:1115.69px;font-size:20.5px;color:#b8b8b8;font-weight:400;font-family:'Liberation Sans', sans-serif;letter-spacing:0.8px;">13%</div>
<div style="position:absolute;left:1156px;top:1180px;width:28px;height:28px;background:#069669;border-radius:6px"></div>
<div class="t " style="left:1204.50px;top:1194.66px;font-size:25.2px;color:#262626;font-weight:400;font-family:'Liberation Sans', sans-serif;-webkit-text-stroke:0.25px #262626;">API Integration</div>
<div class="t " style="right:93.00px;top:1182.61px;font-size:24px;color:#262626;font-weight:400;font-family:'Liberation Mono', monospace;-webkit-text-stroke:0.75px #262626;">13.5h</div>
<div class="t " style="right:93.00px;top:1209.69px;font-size:20.5px;color:#b8b8b8;font-weight:400;font-family:'Liberation Sans', sans-serif;letter-spacing:0.8px;">10%</div>
<div class="card" style="left:488px;top:1350px;width:1802px;height:170px;"></div>
<div class="t " style="left:529.00px;top:1407.24px;font-size:27px;color:#222222;font-weight:700;font-family:'Liberation Sans', sans-serif;">Top Projects</div>
</div></body></html>
